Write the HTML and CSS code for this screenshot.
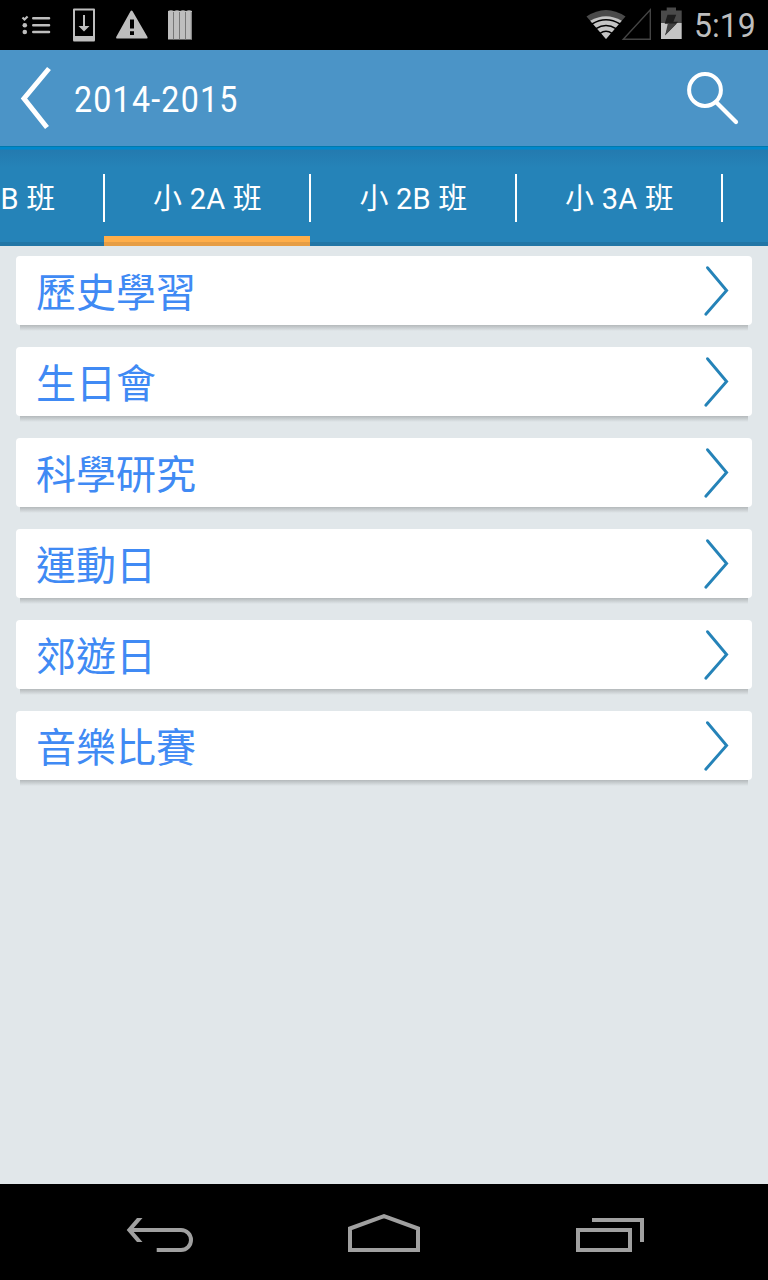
FILE: index.html
```
<!DOCTYPE html>
<html lang="zh-Hant">
<head>
  <meta charset="utf-8">
  <title>2014-2015</title>
  <meta name="viewport" content="width=device-width, initial-scale=1">
  <link rel="stylesheet" href="styles.css">
</head>
<body>

  <div class="status">
    <svg class="status-left" width="200" height="50" viewBox="0 0 200 50">
      <!-- list -->
      <g stroke="#bebebe" stroke-width="2.6" stroke-linecap="round" fill="none">
        <path d="M33.3 18.3H49M33.3 25.2H49M33.3 32H49"/>
        <path d="M22.5 17.500l2 2L27.600 16.500" stroke-width="2.200" stroke-linecap="butt"/>
      </g>
      <circle cx="24.8" cy="25.2" r="2.3" fill="#bebebe"/>
      <circle cx="24.8" cy="32" r="2.3" fill="#bebebe"/>
      <!-- download -->
      <path d="M74 8.5h20q1 0 1 1V40q0 1.500-1 1.500H74q-1 0-1-1.500V9.500q0-1 1-1zM75 10.500V36h18V10.500z" fill="#bebebe" fill-rule="evenodd"/>
      <path d="M83 15h2v11h4.500L84 31.500 78.500 26H83z" fill="#bebebe"/>
      <!-- warning -->
      <path d="M131.500 10.500q.7 0 1.100.8L147.500 37q.5 1.500-.8 1.500H117q-1.300 0-.8-1.500L130.500 11.300q.4-.8 1-.8z" fill="#bebebe"/>
      <path d="M130 19.500h4v9h-4zM130 31.200h4v3.700h-4z" fill="#000"/>
      <!-- bars -->
      <path d="M168 11q3-1.500 6 0v28.500h-6zM174 11q3-1.500 6 0v28.500h-6zM180 11q3-1.500 6 0v28.500h-6zM186 11q3-1.500 6 0v28.500h-6z" fill="#bebebe"/>
      <path d="M173.500 12v27.500M179.500 12v27.500M185.500 12v27.500M191.300 12v27.500" stroke="#777"/>
    </svg>
    <div class="status-right">
      <svg width="104" height="50" viewBox="584 0 104 50">
        <!-- wifi -->
        <path d="M606 39L586.500 16.500Q606 3.500 625.500 16.500z" fill="#4a4a4a"/>
        <path d="M606 39L590.200 20.800Q606 11.500 621.800 20.800z" fill="#c4c4c4"/>
        <path d="M592 24q14-8.500 28 0M596 28.700q10-6.500 20 0M600 33.300q6-4 12 0" fill="none" stroke="#000" stroke-width="1.500"/>
        <!-- signal -->
        <path d="M623.300 39.300L650.300 9.800V39.300z" fill="none" stroke="#444" stroke-width="1.400"/>
        <!-- battery -->
        <path d="M661 10.500h5.700V7.500h9.300v3h5.700V23H661z" fill="#4a4a4a"/>
        <path d="M661 23h20.700v16H661z" fill="#c4c4c4"/>
        <path d="M667.500 14.800h8.700l-2.800 7h4.800L665 35.500l4.200-11.700h-4.500z" fill="#1d1d1d"/>
        <path d="M667.800 23.600h9L665.300 35z" fill="#424242"/>
      </svg>
      <span class="clock">5:19</span>
    </div>
  </div>

  <header class="header">
    <svg class="back" width="34" height="64" viewBox="18 66 34 64">
      <path d="M49 68.500L24 98.500L47 127.500" fill="none" stroke="#fff" stroke-width="5"/>
    </svg>
    <h1 class="title">2014-2015</h1>
    <svg class="search" width="56" height="56" viewBox="684 70 56 56">
      <circle cx="705" cy="90" r="15.900" fill="none" stroke="#fff" stroke-width="4"/>
      <path d="M717 103L736 122" stroke="#fff" stroke-width="4.200" stroke-linecap="round"/>
    </svg>
  </header>

  <nav class="tabs">
    <div class="tab"><span>小 1B 班</span></div>
    <div class="tab active"><span>小 2A 班</span></div>
    <div class="tab"><span>小 2B 班</span></div>
    <div class="tab"><span>小 3A 班</span></div>
    <div class="tab"></div>
  </nav>

  <ul class="list">
    <li class="item"><span>歷史學習</span><svg class="arrow" width="26" height="52" viewBox="0 0 26 52"><path d="M4.500 2.700L23.600 25.500L2.800 49.200"/></svg></li>
    <li class="item"><span>生日會</span><svg class="arrow" width="26" height="52" viewBox="0 0 26 52"><path d="M4.500 2.700L23.600 25.500L2.800 49.200"/></svg></li>
    <li class="item"><span>科學研究</span><svg class="arrow" width="26" height="52" viewBox="0 0 26 52"><path d="M4.500 2.700L23.600 25.500L2.800 49.200"/></svg></li>
    <li class="item"><span>運動日</span><svg class="arrow" width="26" height="52" viewBox="0 0 26 52"><path d="M4.500 2.700L23.600 25.500L2.800 49.200"/></svg></li>
    <li class="item"><span>郊遊日</span><svg class="arrow" width="26" height="52" viewBox="0 0 26 52"><path d="M4.500 2.700L23.600 25.500L2.800 49.200"/></svg></li>
    <li class="item"><span>音樂比賽</span><svg class="arrow" width="26" height="52" viewBox="0 0 26 52"><path d="M4.500 2.700L23.600 25.500L2.800 49.200"/></svg></li>
  </ul>

  <footer class="navbar">
    <svg width="72" height="48" viewBox="124 1208 72 48">
      <path d="M132 1230H181A10 10 0 0 1 181 1250H156.700" fill="none" stroke="#a0a0a0" stroke-width="4"/>
      <path d="M142.500 1218h-5.500L126.700 1230 137 1242h5.500L132 1230z" fill="#a0a0a0"/>
    </svg>
    <svg width="76" height="48" viewBox="347 1208 76 48">
      <path d="M350 1250V1228.500L384 1216.200L418 1228.500V1250z" fill="none" stroke="#a0a0a0" stroke-width="4"/>
    </svg>
    <svg width="72" height="48" viewBox="574 1208 72 48">
      <path d="M578 1230h52v20h-52zM592 1220h50v22" fill="none" stroke="#a0a0a0" stroke-width="4"/>
    </svg>
  </footer>

</body>
</html>
```
FILE: styles.css
```
* {
  box-sizing: border-box;
}
body {
  margin: 0;
  display: flex;
  flex-direction: column;
  height: 1280px;
  overflow: hidden;
  background: #e1e7ea;
  font-family: Roboto, "Noto Sans CJK TC", sans-serif;
}
svg {
  display: block;
  flex: none;
}

.status {
  display: flex;
  justify-content: space-between;
  height: 50px;
  flex: none;
  background: #000;
}
.status-right {
  display: flex;
  width: 184px;
}
.clock {
  margin-left: 6px;
  line-height: 52px;
  font-size: 33px;
  color: #bebebe;
  transform: scaleX(.97);
  transform-origin: left;
}

.header {
  display: flex;
  align-items: center;
  height: 96px;
  flex: none;
  padding: 0 28px 0 18px;
  background: #4b94c7;
  color: #fff;
}
.title {
  flex: 1;
  margin: 3px 0 0 22px;
  font-size: 37px;
  font-weight: 400;
  letter-spacing: 1.4px;
  transform: scaleX(.87);
  transform-origin: left;
}

.tabs {
  display: flex;
  height: 100px;
  flex: none;
  overflow: hidden;
  background:
    linear-gradient(#0079ad 1px, #0088cc 1px, #0088cc 3px, rgba(36, 122, 175, 1) 4px, rgba(36, 131, 184, 0) 22px),
    linear-gradient(transparent 96px, #2276a6 96px),
    #2583b8;
}
.tab {
  display: flex;
  justify-content: center;
  align-items: center;
  flex: none;
  width: 206px;
  font-size: 29px;
  color: #fff;
}
.tab:first-child {
  margin-left: -102px;
}
/* dividers sit half on each neighbouring tab */
.tab {
  background:
    linear-gradient(#fff, #fff) left -1px top 28px / 2px 48px no-repeat,
    linear-gradient(#fff, #fff) right -1px top 28px / 2px 48px no-repeat;
}
.tab.active {
  background:
    linear-gradient(#fff, #fff) left -1px top 28px / 2px 48px no-repeat,
    linear-gradient(#fff, #fff) right -1px top 28px / 2px 48px no-repeat,
    linear-gradient(#ffae49 6px, #e69d44 6px) left bottom / 100% 10px no-repeat;
}
.tab span {
  margin: 0 0 1px 1px;
  white-space: nowrap;
  letter-spacing: .2px;
}

.list {
  display: flex;
  flex-direction: column;
  gap: 22px;
  flex: 1;
  margin: 0;
  padding: 10px 16px;
  list-style: none;
}
.item {
  position: relative;
  display: flex;
  justify-content: space-between;
  align-items: center;
  height: 69px;
  padding: 0 23px 0 20px;
  border-radius: 4px;
  background: #fff;
  font-size: 40px;
  line-height: 69px;
  color: #408af4;
}
.item span {
  padding-top: 5px;
}
.item::after {
  content: "";
  position: absolute;
  top: 100%;
  left: 4px;
  right: 4px;
  height: 6px;
  background: linear-gradient(#b4b9bb, #e1e7ea);
}
.arrow path {
  fill: none;
  stroke: #2583b8;
  stroke-width: 2.9;
  stroke-linecap: round;
}

.navbar {
  display: flex;
  justify-content: space-between;
  align-items: center;
  height: 96px;
  flex: none;
  padding: 0 122px 0 124px;
  background: #000;
}
```
